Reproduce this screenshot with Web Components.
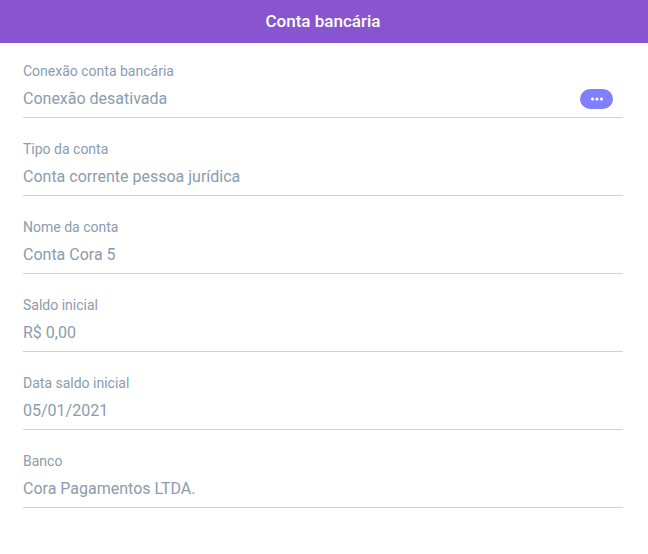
<!DOCTYPE html>
<html lang="pt-BR">
<head>
<meta charset="utf-8">
<title>Conta bancária</title>
<style>
	html, body {
		margin: 0;
		background: #fff;
		font-family: Roboto, sans-serif;
	}
</style>
</head>
<body>
<account-panel heading="Conta bancária">
	<account-field label="Conexão conta bancária" value="Conexão desativada">
		<more-pill slot="action"></more-pill>
	</account-field>
	<account-field label="Tipo da conta" value="Conta corrente pessoa jurídica"></account-field>
	<account-field label="Nome da conta" value="Conta Cora 5"></account-field>
	<account-field label="Saldo inicial" value="R$ 0,00"></account-field>
	<account-field label="Data saldo inicial" value="05/01/2021"></account-field>
	<account-field label="Banco" value="Cora Pagamentos LTDA."></account-field>
</account-panel>

<script>
class AccountPanel extends HTMLElement {
	constructor() {
		super();
		this.attachShadow({ mode: 'open' });
		this.shadowRoot.innerHTML = `
			<style>
				:host {
					display: block;
				}
				header {
					background: #8854d0;
					color: #fff;
					font-size: 17px;
					font-weight: 500;
					height: 43px;
					line-height: 42px;
					padding-right: 2px;
					text-align: center;
				}
				main {
					display: flex;
					flex-direction: column;
					padding: 17px 25px 0 23px;
				}
			</style>
			<header></header>
			<main><slot></slot></main>
		`;
		this.shadowRoot.querySelector('header').textContent = this.getAttribute('heading');
	}
}

class AccountField extends HTMLElement {
	constructor() {
		super();
		this.attachShadow({ mode: 'open' });
		this.shadowRoot.innerHTML = `
			<style>
				:host {
					display: block;
					height: 78px;
				}
				.label {
					color: #8a9cae;
					font-size: 14px;
					line-height: 22px;
				}
				.row {
					align-items: center;
					border-bottom: 1px solid #d2d2d2;
					display: flex;
					height: 35px;
					justify-content: space-between;
					padding-right: 10px;
				}
				.value {
					color: #8a9cae;
					font-size: 16px;
					line-height: 22px;
					margin-bottom: 2px;
				}
				::slotted(*) {
					margin-bottom: 2px;
				}
			</style>
			<div class="label"></div>
			<div class="row">
				<span class="value"></span>
				<slot name="action"></slot>
			</div>
		`;
		this.shadowRoot.querySelector('.label').textContent = this.getAttribute('label');
		this.shadowRoot.querySelector('.value').textContent = this.getAttribute('value');
	}
}

class MorePill extends HTMLElement {
	constructor() {
		super();
		this.attachShadow({ mode: 'open' });
		this.shadowRoot.innerHTML = `
			<style>
				:host {
					align-items: center;
					background: #7f7fff;
					border-radius: 10px;
					display: flex;
					height: 20px;
					justify-content: center;
					width: 33px;
				}
			</style>
			<svg width="14" height="4" viewBox="0 0 14 4" fill="#fff">
				<circle cx="2.5" cy="2" r="1.6"/>
				<circle cx="7" cy="2" r="1.6"/>
				<circle cx="11.5" cy="2" r="1.6"/>
			</svg>
		`;
	}
}

customElements.define('account-panel', AccountPanel);
customElements.define('account-field', AccountField);
customElements.define('more-pill', MorePill);
</script>
</body>
</html>
